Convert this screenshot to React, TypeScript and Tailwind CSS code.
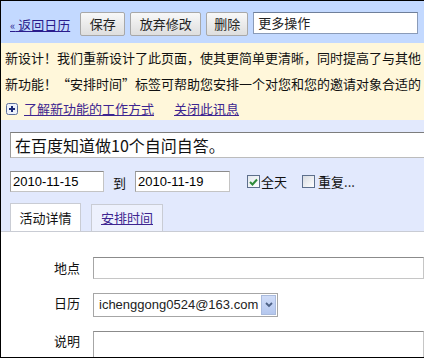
import React from "react";

const cjk = { fontFamily: '"Noto Sans CJK SC", "Liberation Sans", sans-serif' };
const arial = { fontFamily: '"Liberation Sans", "Noto Sans CJK SC", sans-serif' };

function Btn({ children, w }: { children: React.ReactNode; w: string }) {
  return (
    <div
      className={`${w} h-[24px] flex items-center justify-center text-[13px] text-[#222] border border-[#a8a8a8] rounded-[2px] bg-gradient-to-b from-[#f8f8f8] to-[#dedede]`}
    >
      {children}
    </div>
  );
}

export default function App() {
  return (
    <div
      className="w-[424px] h-[358px] overflow-hidden border-l border-t border-b border-black bg-white flex flex-col"
      style={cjk}
    >
      {/* toolbar */}
      <div className="h-[42px] shrink-0 bg-[#c3d9ff] flex items-start pt-[11px] pl-[9px]">
        <a className="mt-[5px] text-[13px] leading-[16px] text-[#2a1c8c] underline whitespace-nowrap">
          <span className="text-[11px]">«</span> 返回日历
        </a>
        <div className="ml-[10px] flex gap-[5px]">
          <Btn w="w-[45px]">保存</Btn>
          <Btn w="w-[71px]">放弃修改</Btn>
          <Btn w="w-[42px]">删除</Btn>
        </div>
        <div className="ml-[5px] w-[165px] h-[22px] bg-white border border-[#8a9bb8] border-t-[#6f7f9a] flex items-center pl-[4px] text-[13px] text-[#222]">
          更多操作
        </div>
      </div>

      {/* notice */}
      <div className="h-[77px] shrink-0 bg-[#fff7da] text-[13px] text-[#111] whitespace-nowrap overflow-hidden pl-[4px]">
        <div className="h-[27px] pt-[7px] leading-[16px]">新设计！我们重新设计了此页面，使其更简单更清晰，同时提高了与其他</div>
        <div className="h-[25px] pt-[6px] leading-[16px]">新功能！“安排时间”标签可帮助您安排一个对您和您的邀请对象合适的</div>
        <div className="flex items-center h-[25px] pt-[2px]">
          <svg width="12" height="12" viewBox="0 0 12 12" className="ml-[1px]">
            <rect x="0.5" y="0.5" width="11" height="11" rx="2" fill="#eef2fb" stroke="#5d6f9c" />
            <path d="M3 6 H9 M6 3 V9" stroke="#1b2a77" strokeWidth="2" />
          </svg>
          <a className="ml-[6px] leading-[16px] text-[#3d2590] underline">了解新功能的工作方式</a>
          <a className="ml-[20px] leading-[16px] text-[#3d2590] underline">关闭此讯息</a>
        </div>
      </div>

      {/* blue edit area */}
      <div className="h-[112px] shrink-0 bg-[#e2e9fd] border-b border-[#c9ccd4] pl-[9px] flex flex-col">
        <div className="mt-[12px] h-[27px] w-[420px] bg-white border border-[#bcbcbc] border-t-[#7d7d7d] border-l-[#9a9a9a] flex items-center pl-[4px] text-[16px] text-[#111] whitespace-nowrap">
          在百度知道做10个自问自答。
        </div>
        <div className="mt-[13px] h-[21px] flex items-center text-[13px]">
          <div className="w-[94px] h-[21px] bg-white border border-[#c4c4c4] border-t-[#8b8b8b] border-l-[#a0a0a0] flex items-center pl-[2px]" style={arial}>
            2010-11-15
          </div>
          <span className="ml-[9px] mt-[3px] text-[#111]">到</span>
          <div className="ml-[9px] w-[95px] h-[21px] bg-white border border-[#c4c4c4] border-t-[#8b8b8b] border-l-[#a0a0a0] flex items-center pl-[2px]" style={arial}>
            2010-11-19
          </div>
          <div className="ml-[17px] w-[13px] h-[13px] border border-[#5d6f8c] bg-gradient-to-br from-[#e4e9ee] to-[#ffffff] flex items-center justify-center">
            <svg width="9" height="8" viewBox="0 0 9 8">
              <path d="M1 4 L3.5 6.5 L8 1.5" stroke="#2e8b3a" strokeWidth="2" fill="none" />
            </svg>
          </div>
          <span className="ml-[1px] text-[#111]">全天</span>
          <div className="ml-[15px] w-[13px] h-[13px] border border-[#5d6f8c] bg-gradient-to-br from-[#d8dce2] to-[#ffffff]" />
          <span className="ml-[3px] text-[#111]">重复...</span>
        </div>
        <div className="mt-[11px] flex gap-[10px] items-end h-[28px]">
          <div className="w-[71px] h-[28px] bg-white border border-b-0 border-[#c9ccd4] flex items-center justify-center text-[13px] text-[#111]">
            活动详情
          </div>
          <div className="w-[72px] h-[27px] bg-[#edf1fd] border border-b-0 border-[#c9ccd4] flex items-center justify-center text-[13px]">
            <a className="text-[#3d2590] underline leading-[16px]">安排时间</a>
          </div>
        </div>
      </div>

      {/* form */}
      <div className="flex-1 bg-white text-[13px] text-[#111] pt-[25px]">
        <div className="flex items-center h-[22px]">
          <div className="w-[79px] text-right">地点</div>
          <div className="ml-[13px] flex-1 h-[22px] border border-[#c6c6c6] border-t-[#8b8b8b] border-l-[#a6a6a6]" />
        </div>
        <div className="flex items-center h-[24px] mt-[14px]">
          <div className="w-[79px] text-right mb-[4px]">日历</div>
          <div className="ml-[13px] w-[185px] h-[24px] border border-[#a6a6a6] flex items-center" style={arial}>
            <span className="flex-1 pl-[5px] text-[13px] text-[#222]">ichenggong0524@163.com</span>
            <span className="w-[15px] h-[20px] mr-[1px] bg-gradient-to-b from-[#cfdcf8] to-[#b4c7ee] border border-[#aabbdd] flex items-center justify-center">
              <svg width="8" height="6" viewBox="0 0 8 6">
                <path d="M1 1 L4 4 L7 1" stroke="#4d6185" strokeWidth="1.8" fill="none" />
              </svg>
            </span>
          </div>
        </div>
        <div className="flex items-start mt-[14px]">
          <div className="w-[79px] text-right">说明</div>
          <div className="ml-[13px] flex-1 h-[40px] border border-[#c6c6c6] border-t-[#8b8b8b] border-l-[#a6a6a6]" />
        </div>
      </div>
    </div>
  );
}
